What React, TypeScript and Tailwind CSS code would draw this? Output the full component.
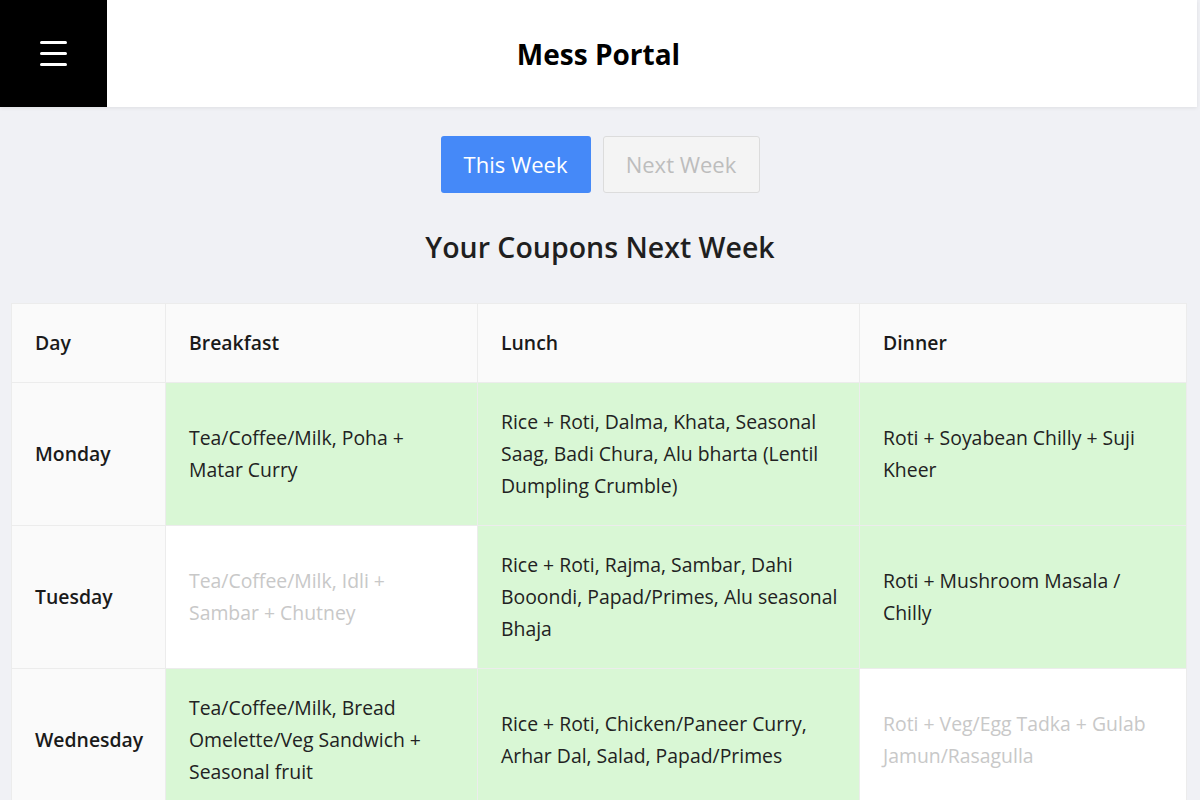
import React, { useState } from 'react';

type Meal = { text: string; taken: boolean };

interface DayRow {
  day: string;
  breakfast: Meal;
  lunch: Meal;
  dinner: Meal;
}

const rows: DayRow[] = [
  {
    day: 'Monday',
    breakfast: { text: 'Tea/Coffee/Milk, Poha + Matar Curry', taken: true },
    lunch: { text: 'Rice + Roti, Dalma, Khata, Seasonal Saag, Badi Chura, Alu bharta (Lentil Dumpling Crumble)', taken: true },
    dinner: { text: 'Roti + Soyabean Chilly + Suji Kheer', taken: true },
  },
  {
    day: 'Tuesday',
    breakfast: { text: 'Tea/Coffee/Milk, Idli + Sambar + Chutney', taken: false },
    lunch: { text: 'Rice + Roti, Rajma, Sambar, Dahi Booondi, Papad/Primes, Alu seasonal Bhaja', taken: true },
    dinner: { text: 'Roti + Mushroom Masala / Chilly', taken: true },
  },
  {
    day: 'Wednesday',
    breakfast: { text: 'Tea/Coffee/Milk, Bread Omelette/Veg Sandwich + Seasonal fruit', taken: true },
    lunch: { text: 'Rice + Roti, Chicken/Paneer Curry, Arhar Dal, Salad, Papad/Primes', taken: true },
    dinner: { text: 'Roti + Veg/Egg Tadka + Gulab Jamun/Rasagulla', taken: false },
  },
];

const MealCell: React.FC<{ meal: Meal; wide?: boolean }> = ({ meal, wide }) => (
  <td
    className={clsxCell(meal.taken, wide)}
  >
    {meal.text}
  </td>
);

function clsxCell(taken: boolean, wide?: boolean) {
  const base = 'border border-[#ececec] py-[23px] pl-[23px] ';
  const pad = wide ? 'pr-[12px] ' : 'pr-[23px] ';
  return base + pad + (taken ? 'bg-[#d9f7d5] text-[#222]' : 'bg-white text-[#c8c8c8]');
}

const App: React.FC = () => {
  const [week, setWeek] = useState<'this' | 'next'>('this');

  return (
    <div
      className="min-h-screen bg-[#f0f1f5] text-[#1a1a1a]"
      style={{ fontFamily: '"Open Sans", "Noto Sans", sans-serif' }}
    >
      <header className="flex h-[107px] w-[1197px] items-center bg-white shadow-[0_1px_4px_rgba(0,0,0,0.08)]">
        <button className="flex h-[107px] w-[107px] shrink-0 flex-col items-center justify-center gap-[8px] bg-black">
          <span className="block h-[3px] w-[27px] rounded-sm bg-white" />
          <span className="block h-[3px] w-[27px] rounded-sm bg-white" />
          <span className="block h-[3px] w-[27px] rounded-sm bg-white" />
        </button>
        <h1 className="flex-1 pr-[107px] text-center text-[28px] font-bold text-black">Mess Portal</h1>
      </header>

      <div className="mt-[29px] flex justify-center gap-3">
        <button
          onClick={() => setWeek('this')}
          className="h-[57px] w-[150px] rounded-[3px] bg-[#4589f8] text-[22px] text-white"
        >
          This Week
        </button>
        <button
          onClick={() => setWeek('next')}
          className="h-[57px] w-[157px] rounded-[3px] border border-[#dcdcdc] bg-[#f4f4f4] text-[22px] text-[#bdbdbd]"
        >
          Next Week
        </button>
      </div>

      <h2 className="mt-[33px] text-center text-[28.5px] font-semibold text-[#1f1f1f]">
        Your Coupons {week === 'this' ? 'Next Week' : 'Next Week'}
      </h2>

      <div className="mt-[34px] pl-[11px] pr-[13px]">
        <table className="w-full table-fixed border-collapse text-[19.4px] leading-[32px]">
          <colgroup>
            <col className="w-[154px]" />
            <col className="w-[312px]" />
            <col className="w-[382px]" />
            <col />
          </colgroup>
          <thead>
            <tr className="bg-[#fafafa] text-left">
              <th className="border border-[#ececec] px-[23px] py-[23px] font-semibold">Day</th>
              <th className="border border-[#ececec] px-[23px] py-[23px] font-semibold">Breakfast</th>
              <th className="border border-[#ececec] px-[23px] py-[23px] font-semibold">Lunch</th>
              <th className="border border-[#ececec] px-[23px] py-[23px] font-semibold">Dinner</th>
            </tr>
          </thead>
          <tbody>
            {rows.map((r) => (
              <tr key={r.day}>
                <td className="border border-[#ececec] bg-[#fafafa] px-[23px] py-[23px] font-semibold">{r.day}</td>
                <MealCell meal={r.breakfast} />
                <MealCell meal={r.lunch} wide />
                <MealCell meal={r.dinner} />
              </tr>
            ))}
          </tbody>
        </table>
      </div>
    </div>
  );
};

export default App;
